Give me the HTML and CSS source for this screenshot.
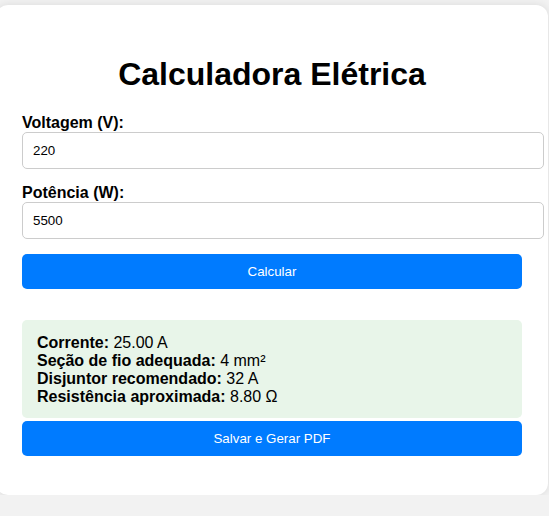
FILE: index.html
```html
<!DOCTYPE html>
<html lang="pt">

<head>
  <meta charset="UTF-8">
  <title>Calculadora Elétrica</title>
  <meta name="viewport" content="width=device-width, initial-scale=1.0">
  <link rel="stylesheet" href="styles.css">
</head>

<body>

  <div class="container">
    <h1>Calculadora Elétrica</h1>

    <label for="voltagem">Voltagem (V):</label>
    <input type="number" id="voltagem" value="220">

    <label for="potencia">Potência (W):</label>
    <input type="number" id="potencia" value="5500">

    <button type="button" class="btn-calc">Calcular</button>

    <div class="resultado">
      <strong>Corrente:</strong> 25.00 A<br>
      <strong>Seção de fio adequada:</strong> 4 mm²<br>
      <strong>Disjuntor recomendado:</strong> 32 A<br>
      <strong>Resistência aproximada:</strong> 8.80 Ω
    </div>

    <button type="button" class="btn-pdf">Salvar e Gerar PDF</button>
  </div>

</body>

</html>
```

FILE: styles.css
```css
body {
  font-family: "Liberation Sans", Arial, sans-serif;
  background: #f2f2f2;
  margin: 0;
  padding-top: 5px;
}

.container {
  width: 500px;
  background: white;
  padding: 30px 26px 39px;
  margin-left: -4px;
  border-radius: 12px;
  box-shadow: 0 0 10px rgba(0, 0, 0, 0.1);
}

h1 {
  text-align: center;
  font-size: 32px;
  margin: 21px 0;
}

label {
  display: block;
  font-weight: bold;
  font-size: 16px;
}

input {
  display: block;
  width: 100%;
  padding: 10px;
  margin: 0 0 15px;
  border: 1px solid #ccc;
  border-radius: 5px;
  font-family: "Liberation Sans", Arial, sans-serif;
  font-size: 13.33px;
}

button {
  display: block;
  width: 100%;
  padding: 10px;
  border: none;
  border-radius: 5px;
  background-color: #007bff;
  color: white;
  font-family: "Liberation Sans", Arial, sans-serif;
  font-size: 13.33px;
  cursor: pointer;
}

.resultado {
  margin-top: 31px;
  padding: 14px 15px 12px;
  background: #e8f5e9;
  border-radius: 5px;
  font-size: 16px;
}

.btn-pdf {
  margin-top: 3px;
}
```
